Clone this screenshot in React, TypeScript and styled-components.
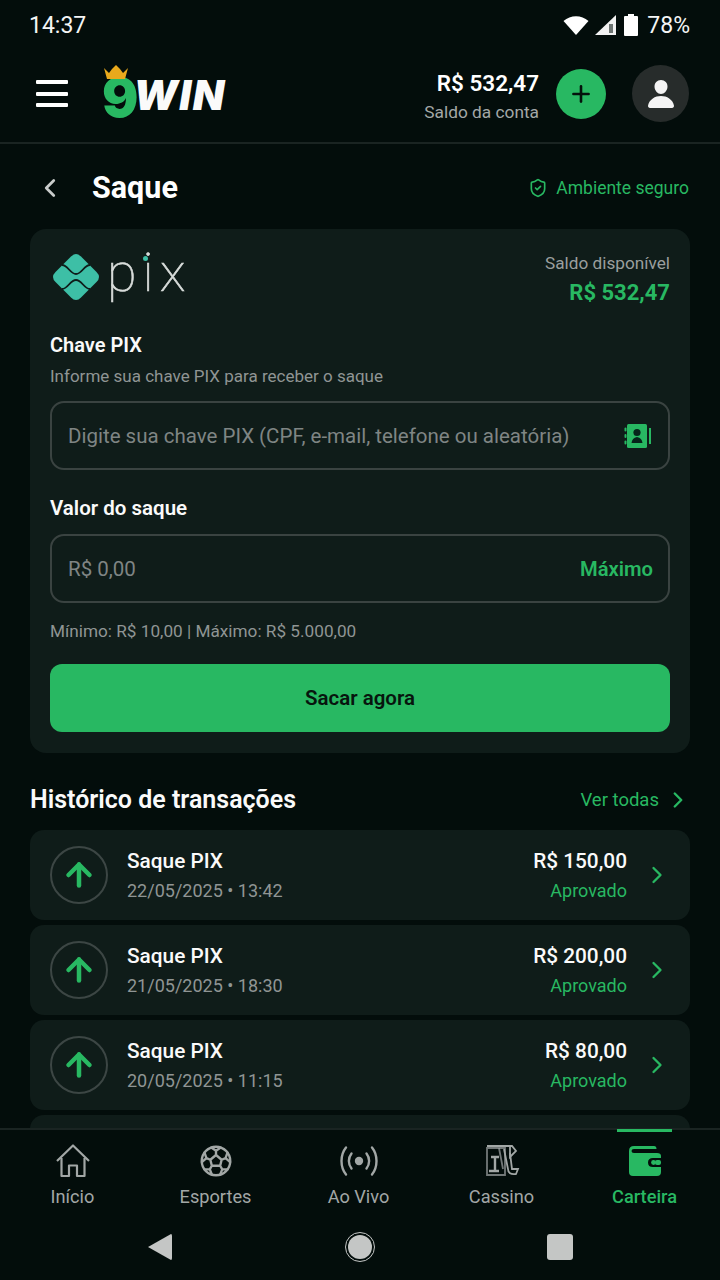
import React from 'react';
import styled, { createGlobalStyle } from 'styled-components';
import { ArrowUp, ChevronLeft, ChevronRight, Plus, ShieldCheck } from 'lucide-react';
import { IoFootballOutline, IoPerson } from 'react-icons/io5';

const GREEN = '#28b862';
const CARD = '#0f1c19';

const GlobalStyle = createGlobalStyle`
  html, body {
    margin: 0;
    padding: 0;
    background: #030d0b;
    font-family: Roboto, "Liberation Sans", sans-serif;
  }
  * { box-sizing: border-box; }
`;

const transactions = [
  { date: '22/05/2025 • 13:42', amount: 'R$ 150,00' },
  { date: '21/05/2025 • 18:30', amount: 'R$ 200,00' },
  { date: '20/05/2025 • 11:15', amount: 'R$ 80,00' },
];

const HomeIcon = () => (
  <svg width="36" height="36" viewBox="0 0 36 36" fill="none" stroke="currentColor" strokeWidth="2.2" strokeLinejoin="round">
    <path d="M2 18 L18 2.5 L34 18" />
    <path d="M6.5 15 V33 H14 V22.5 H22 V33 H29.5 V15" />
  </svg>
);

const LiveIcon = () => (
  <svg width="40" height="34" viewBox="0 0 40 34" fill="none" stroke="currentColor" strokeWidth="2.4" strokeLinecap="round">
    <circle cx="20" cy="17" r="4.2" fill="currentColor" stroke="none" />
    <path d="M12.5 9.5 C9 14 9 20 12.5 24.5" />
    <path d="M27.5 9.5 C31 14 31 20 27.5 24.5" />
    <path d="M7 3.5 C1 11 1 23 7 30.5" />
    <path d="M33 3.5 C39 11 39 23 33 30.5" />
  </svg>
);

const CardsIcon = () => (
  <svg width="36" height="36" viewBox="0 0 36 36" fill="none" stroke="currentColor" strokeWidth="1.8">
    <path d="M3 5 H21 V32 H3 Z" opacity="0.7" />
    <path d="M3 3 H28 L32 8 L26 14 V4" />
    <path d="M7 14 H15 M11 14 V28 M5 28 H15" strokeWidth="2.4" />
    <path d="M20 6 L24 26 Q24 32 32 31 L34 26 L28 26 L26 10" />
    <path d="M15 5 L19 26" opacity="0.7" />
  </svg>
);

const WalletIcon = () => (
  <svg width="34" height="32" viewBox="0 0 34 32" fill={GREEN}>
    <path d="M6 1 H26 Q28.5 1 28.5 4 H6 Q3.5 4 3.5 6 Q3.5 8 6 8 H29 Q33 8 33 11 V13 H25 Q20 13 20 17.5 Q20 22 25 22 H33 V27 Q33 31 29 31 H5 Q1 31 1 27 V6 Q1 1 6 1 Z" />
    <circle cx="25.5" cy="17.5" r="2.4" />
    <rect x="27" y="15" width="6" height="5" rx="2" />
  </svg>
);

const navItems = [
  { label: 'Início', icon: <HomeIcon /> },
  { label: 'Esportes', icon: <IoFootballOutline size={38} /> },
  { label: 'Ao Vivo', icon: <LiveIcon /> },
  { label: 'Cassino', icon: <CardsIcon /> },
  { label: 'Carteira', icon: <WalletIcon />, active: true },
];

const App = () => {
  return (
    <Screen>
      <GlobalStyle />
      <StatusBar>
        <span>14:37</span>
        <StatusRight>
          <svg width="26" height="22" viewBox="0 0 26 22" fill="#fff">
            <path d="M0.5 7 C7.5 0.5 18.5 0.5 25.5 7 L13 21 Z" />
          </svg>
          <svg width="22" height="20" viewBox="0 0 22 20" fill="#fff">
            <path d="M21 0 V20 H0 Z" opacity="0.95" />
            <rect x="14" y="9" width="4" height="9" fill="#6d7472" />
          </svg>
          <svg width="16" height="22" viewBox="0 0 16 22" fill="#fff">
            <path d="M5 0 H11 V2 H14 Q15 2 15 3 V21 Q15 22 14 22 H2 Q1 22 1 21 V3 Q1 2 2 2 H5 Z" />
          </svg>
          <span>78%</span>
        </StatusRight>
      </StatusBar>

      <Header>
        <HeaderLeft>
          <MenuButton>
            <span />
            <span />
            <span />
          </MenuButton>
          <Logo>
            <Crown width="26" height="14" viewBox="0 0 26 14" fill="#e9a91c">
              <path d="M1 3 L6 8 L9 4 L13 0 L17 4 L20 8 L25 3 L22 14 H4 Z" />
            </Crown>
            <LogoNine>9</LogoNine>
            <LogoWin>WIN</LogoWin>
          </Logo>
        </HeaderLeft>
        <HeaderRight>
          <Balance>
            <strong>R$ 532,47</strong>
            <span>Saldo da conta</span>
          </Balance>
          <AddButton>
            <Plus size={26} color="#04130c" strokeWidth={2.4} />
          </AddButton>
          <Avatar>
            <IoPerson size={32} color="#f4f4f4" />
          </Avatar>
        </HeaderRight>
      </Header>

      <Main>
        <TitleRow>
          <TitleLeft>
            <ChevronLeft size={30} color="#c9cccb" strokeWidth={2.2} />
            <h1>Saque</h1>
          </TitleLeft>
          <Secure>
            <ShieldCheck size={20} strokeWidth={2} />
            Ambiente seguro
          </Secure>
        </TitleRow>

        <Card>
          <CardTop>
            <PixLogo>
              <svg width="46" height="46" viewBox="0 0 46 46">
                <path d="M23 0 Q25.5 0 28 2.5 L43.5 18 Q48.5 23 43.5 28 L28 43.5 Q23 48.5 18 43.5 L2.5 28 Q-2.5 23 2.5 18 L18 2.5 Q20.5 0 23 0 Z" fill="#3dbfa6" />
                <path d="M9 11 C15 11 17 20 23 20 C29 20 31 11 37 11 M9 35 C15 35 17 26 23 26 C29 26 31 35 37 35" fill="none" stroke={CARD} strokeWidth="1.8" />
              </svg>
              <PixWord>
                pix
                <PixDot />
              </PixWord>
            </PixLogo>
            <Available>
              <span>Saldo disponível</span>
              <strong>R$ 532,47</strong>
            </Available>
          </CardTop>

          <FieldLabel>Chave PIX</FieldLabel>
          <FieldHint>Informe sua chave PIX para receber o saque</FieldHint>
          <InputBox>
            <Placeholder>Digite sua chave PIX (CPF, e-mail, telefone ou aleatória)</Placeholder>
            <svg width="28" height="26" viewBox="0 0 28 26" fill={GREEN}>
              <rect x="3" y="1" width="20" height="24" rx="1.5" />
              <rect x="0.5" y="4.5" width="2" height="4" rx="1" />
              <rect x="0.5" y="11" width="2" height="4" rx="1" />
              <rect x="0.5" y="17.5" width="2" height="4" rx="1" />
              <rect x="25" y="5" width="2" height="16" />
              <circle cx="13" cy="9.5" r="3.6" fill="#06241a" />
              <path d="M7.5 20 Q8 15 13 14 Q18 15 18.5 20 Z" fill="#06241a" />
            </svg>
          </InputBox>

          <ValueLabel>Valor do saque</ValueLabel>
          <InputBox>
            <Placeholder>R$ 0,00</Placeholder>
            <MaxLink>Máximo</MaxLink>
          </InputBox>
          <Limits>Mínimo: R$ 10,00 | Máximo: R$ 5.000,00</Limits>
          <SubmitButton>Sacar agora</SubmitButton>
        </Card>

        <SectionHead>
          <h2>Histórico de transações</h2>
          <SeeAll>
            Ver todas
            <ChevronRight size={26} strokeWidth={2.2} />
          </SeeAll>
        </SectionHead>

        <TxList>
          {transactions.map(tx => (
            <TxRow key={tx.date}>
              <TxIcon>
                <ArrowUp size={36} color={GREEN} strokeWidth={3} />
              </TxIcon>
              <TxInfo>
                <strong>Saque PIX</strong>
                <span>{tx.date}</span>
              </TxInfo>
              <TxAmount>
                <strong>{tx.amount}</strong>
                <span>Aprovado</span>
              </TxAmount>
              <ChevronRight size={28} color={GREEN} strokeWidth={2} />
            </TxRow>
          ))}
          {/* the next row only peeks out above the nav */}
          <TxRow />
        </TxList>
      </Main>

      <BottomNav>
        {navItems.map(item => (
          <NavItem key={item.label} $active={item.active}>
            <NavIcon>{item.icon}</NavIcon>
            <span>{item.label}</span>
          </NavItem>
        ))}
      </BottomNav>

      <SystemBar>
        <svg width="26" height="28" viewBox="0 0 26 28" fill="#c4c6c5">
          <path d="M24 1 Q25 1 25 3 V25 Q25 27 24 27 L1 14 Z" />
        </svg>
        <HomeRing />
        <StopSquare />
      </SystemBar>
    </Screen>
  );
};

export default App;

const Screen = styled.div`
  width: 720px;
  height: 1280px;
  display: flex;
  flex-direction: column;
  overflow: hidden;
  background: #030d0b;
  color: #fff;
`;

const StatusBar = styled.div`
  height: 48px;
  flex-shrink: 0;
  padding: 2px 30px 0 29px;
  display: flex;
  align-items: center;
  justify-content: space-between;
  font-size: 23px;
  color: #f4f5f5;
`;

const StatusRight = styled.div`
  display: flex;
  align-items: center;
  gap: 6px;
  span {
    margin-left: 2px;
  }
`;

const Header = styled.header`
  height: 96px;
  flex-shrink: 0;
  padding: 0 31px 3px 36px;
  display: flex;
  align-items: center;
  justify-content: space-between;
  border-bottom: 2px solid #1a2422;
`;

const HeaderLeft = styled.div`
  display: flex;
  align-items: center;
  gap: 34px;
`;

const MenuButton = styled.div`
  width: 32px;
  display: flex;
  flex-direction: column;
  gap: 7.5px;
  span {
    display: block;
    height: 4px;
    border-radius: 1px;
    background: #fff;
  }
`;

const Logo = styled.div`
  position: relative;
  display: flex;
  align-items: baseline;
  padding-top: 2px;
  margin-top: 10px;
`;

const Crown = styled.svg`
  position: absolute;
  left: 1px;
  top: -8px;
`;

const LogoNine = styled.span`
  font-family: Inter, Lato, sans-serif;
  font-size: 54px;
  line-height: 46px;
  font-weight: 900;
  letter-spacing: -1px;
  color: ${GREEN};
`;

const LogoWin = styled.span`
  position: relative;
  top: -7px;
  margin-left: -4px;
  font-family: Inter, Lato, sans-serif;
  font-size: 41px;
  line-height: 46px;
  font-weight: 900;
  font-style: italic;
  letter-spacing: 1.5px;
  color: #fafafa;
`;

const HeaderRight = styled.div`
  display: flex;
  align-items: center;
`;

const Balance = styled.div`
  display: flex;
  flex-direction: column;
  align-items: flex-end;
  margin-right: 17px;
  padding-top: 6px;
  strong {
    font-size: 22.5px;
    line-height: 30px;
    font-weight: 600;
  }
  span {
    font-size: 17.3px;
    line-height: 28px;
    color: #a3a8a7;
  }
`;

const AddButton = styled.div`
  width: 50px;
  height: 50px;
  border-radius: 50%;
  background: ${GREEN};
  display: flex;
  align-items: center;
  justify-content: center;
  margin-right: 26px;
`;

const Avatar = styled.div`
  width: 57px;
  height: 57px;
  border-radius: 50%;
  background: #272c2b;
  display: flex;
  align-items: center;
  justify-content: center;
`;

const Main = styled.main`
  flex: 1;
  min-height: 0;
  overflow: hidden;
  padding: 0 30px;
`;

const TitleRow = styled.div`
  height: 85px;
  padding: 2px 1px 0 0;
  display: flex;
  align-items: center;
  justify-content: space-between;
`;

const TitleLeft = styled.div`
  display: flex;
  align-items: center;
  gap: 27px;
  padding-left: 5px;
  h1 {
    margin: 0;
    font-size: 30.5px;
    font-weight: 700;
    color: #fff;
  }
`;

const Secure = styled.div`
  display: flex;
  align-items: center;
  gap: 8px;
  font-size: 17.5px;
  color: ${GREEN};
`;

const Card = styled.section`
  background: ${CARD};
  border-radius: 16px;
  padding: 20px 20px 21px;
  height: 524px;
`;

const CardTop = styled.div`
  display: flex;
  justify-content: space-between;
  height: 78px;
`;

const PixLogo = styled.div`
  display: flex;
  align-items: center;
  height: 56px;
  padding-left: 3px;
  gap: 8px;
`;

const PixWord = styled.span`
  position: relative;
  top: -4px;
  font-family: Roboto, sans-serif;
  font-weight: 100;
  font-size: 54px;
  line-height: 56px;
  letter-spacing: 6px;
  -webkit-text-stroke: 0.6px #d9dddb;
  color: #d9dddb;
`;

const PixDot = styled.i`
  position: absolute;
  left: 36px;
  top: 11px;
  width: 5px;
  height: 5px;
  border-radius: 50%;
  background: #3dbfa6;
`;

const Available = styled.div`
  display: flex;
  flex-direction: column;
  align-items: flex-end;
  span {
    font-size: 17.2px;
    line-height: 28px;
    color: #9a9f9e;
  }
  strong {
    font-size: 22px;
    line-height: 32px;
    font-weight: 700;
    color: ${GREEN};
  }
`;

const FieldLabel = styled.div`
  font-size: 20px;
  line-height: 36px;
  font-weight: 600;
  color: #fafafa;
`;

const ValueLabel = styled(FieldLabel)`
  margin: 20px 0 8px;
  font-size: 20.5px;
`;

const FieldHint = styled.div`
  font-size: 17px;
  line-height: 26px;
  color: #8f9594;
  margin-bottom: 12px;
`;

const InputBox = styled.div`
  height: 69px;
  padding: 0 16px;
  display: flex;
  align-items: center;
  justify-content: space-between;
  border: 2px solid #3a4341;
  border-radius: 14px;
`;

const Placeholder = styled.span`
  font-size: 20.5px;
  color: #7f8584;
`;

const MaxLink = styled.span`
  margin-right: -1px;
  font-size: 20.2px;
  font-weight: 600;
  color: ${GREEN};
`;

const Limits = styled.div`
  margin: 15px 0 20px;
  font-size: 17.2px;
  line-height: 26px;
  color: #8f9594;
`;

const SubmitButton = styled.div`
  height: 68px;
  border-radius: 12px;
  background: ${GREEN};
  display: flex;
  align-items: center;
  justify-content: center;
  font-size: 20.5px;
  font-weight: 600;
  color: #07150e;
`;

const SectionHead = styled.div`
  height: 77px;
  padding-top: 16px;
  display: flex;
  align-items: center;
  justify-content: space-between;
  h2 {
    margin: 0;
    font-size: 25px;
    font-weight: 600;
    color: #fafafa;
  }
`;

const SeeAll = styled.div`
  display: flex;
  align-items: center;
  gap: 6px;
  margin-right: -1px;
  font-size: 18.5px;
  color: ${GREEN};
`;

const TxList = styled.div`
  display: flex;
  flex-direction: column;
  gap: 5px;
`;

const TxRow = styled.div`
  height: 90px;
  flex-shrink: 0;
  display: flex;
  align-items: center;
  padding: 0 19px 0 20px;
  background: ${CARD};
  border-radius: 14px;
`;

const TxIcon = styled.div`
  width: 58px;
  height: 58px;
  border-radius: 50%;
  border: 2px solid #3c4644;
  display: flex;
  align-items: center;
  justify-content: center;
  margin-right: 19px;
`;

const TxInfo = styled.div`
  flex: 1;
  display: flex;
  flex-direction: column;
  padding-top: 2px;
  strong {
    font-size: 20.8px;
    line-height: 30px;
    font-weight: 500;
    color: #fafafa;
  }
  span {
    font-size: 18px;
    line-height: 30px;
    color: #8f9594;
  }
`;

const TxAmount = styled.div`
  display: flex;
  flex-direction: column;
  align-items: flex-end;
  margin-right: 16px;
  padding-top: 2px;
  strong {
    font-size: 20.8px;
    line-height: 30px;
    font-weight: 500;
    color: #fafafa;
  }
  span {
    font-size: 18px;
    line-height: 30px;
    color: ${GREEN};
  }
`;

const BottomNav = styled.nav`
  height: 92px;
  flex-shrink: 0;
  display: grid;
  grid-template-columns: repeat(5, 143px);
  padding-left: 1px;
  border-top: 2px solid #1a2422;
  background: #030d0b;
`;

const NavItem = styled.div<{ $active?: boolean }>`
  position: relative;
  display: flex;
  flex-direction: column;
  align-items: center;
  padding-top: 11px;
  font-size: 18.2px;
  color: ${({ $active }) => ($active ? GREEN : '#a2a7a6')};
  span {
    margin-top: 2px;
    line-height: 28px;
    font-weight: ${({ $active }) => ($active ? 500 : 400)};
  }
  ${({ $active }) =>
    $active &&
    `
    &::before {
      content: '';
      position: absolute;
      top: -1px;
      left: 44px;
      width: 55px;
      height: 3px;
      background: ${GREEN};
    }
  `}
`;

const NavIcon = styled.div`
  height: 40px;
  display: flex;
  align-items: center;
  justify-content: center;
`;

const SystemBar = styled.div`
  height: 60px;
  flex-shrink: 0;
  display: flex;
  align-items: center;
  justify-content: center;
  gap: 172px;
  padding-bottom: 7px;
`;

const HomeRing = styled.div`
  width: 30px;
  height: 30px;
  border-radius: 50%;
  border: 1.5px solid #c4c6c5;
  padding: 2px;
  background: #c4c6c5;
  background-clip: content-box;
`;

const StopSquare = styled.div`
  width: 26px;
  height: 26px;
  border-radius: 3px;
  background: #c4c6c5;
`;
